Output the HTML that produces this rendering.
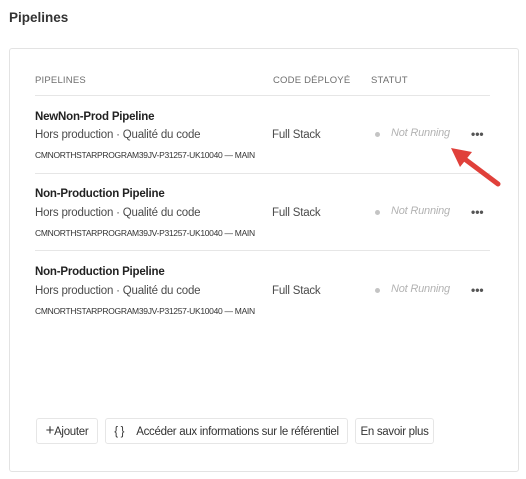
<!DOCTYPE html><html><head><style>
body{margin:0;width:526px;height:479px;background:#fff;font-family:"Liberation Sans",sans-serif;color:#2c2c2c;position:relative;overflow:hidden}
.a{position:absolute;white-space:nowrap}
.card{position:absolute;left:9px;top:48px;width:508px;height:422px;border:1px solid #e3e3e3;border-radius:3px}
.h{font-size:9.5px;color:#6e6e6e;letter-spacing:.2px}
.n{font-size:11.5px;font-weight:bold;color:#222;letter-spacing:-.2px}
.s{font-size:11.5px;color:#4b4b4b;letter-spacing:-.2px}
.r{font-size:8.5px;color:#333;letter-spacing:-.3px}
.st{font-size:11px;color:#b3b3b3;font-style:italic;letter-spacing:-.2px}
.dot{position:absolute;width:5px;height:5px;border-radius:50%;background:#c4c4c4}
.line{position:absolute;left:35px;width:455px;height:1px;background:#e6e6e6}
.more{font-size:12px;font-weight:bold;color:#555}
.btn{position:absolute;top:418px;height:26px;border:1px solid #e6e6e6;border-radius:3px;font-size:11.5px;line-height:26px;color:#333;letter-spacing:-.3px;box-sizing:border-box;text-align:center}
</style></head><body>
<div class="a" style="left:9px;top:10px;font-size:13.5px;font-weight:bold;color:#333">Pipelines</div>
<div class="card"></div>
<div class="a h" style="left:35px;top:75px">PIPELINES</div>
<div class="a h" style="left:273px;top:75px">CODE DÉPLOYÉ</div>
<div class="a h" style="left:371px;top:75px">STATUT</div>
<div class="line" style="top:95px"></div>

<div class="a n" style="left:35px;top:111px">NewNon-Prod Pipeline</div>
<div class="a s" style="left:35px;top:129px">Hors production · Qualité du code</div>
<div class="a r" style="left:35px;top:150px">CMNORTHSTARPROGRAM39JV-P31257-UK10040 — MAIN</div>
<div class="a s" style="left:272px;top:129px">Full Stack</div>
<div class="dot" style="left:375px;top:132px"></div>
<div class="a st" style="left:391px;top:127px">Not Running</div>
<div class="a more" style="left:471px;top:127px">•••</div>
<div class="line" style="top:173px"></div>

<div class="a n" style="left:35px;top:188px">Non-Production Pipeline</div>
<div class="a s" style="left:35px;top:207px">Hors production · Qualité du code</div>
<div class="a r" style="left:35px;top:228px">CMNORTHSTARPROGRAM39JV-P31257-UK10040 — MAIN</div>
<div class="a s" style="left:272px;top:207px">Full Stack</div>
<div class="dot" style="left:375px;top:210px"></div>
<div class="a st" style="left:391px;top:205px">Not Running</div>
<div class="a more" style="left:471px;top:205px">•••</div>
<div class="line" style="top:250px"></div>

<div class="a n" style="left:35px;top:266px">Non-Production Pipeline</div>
<div class="a s" style="left:35px;top:285px">Hors production · Qualité du code</div>
<div class="a r" style="left:35px;top:306px">CMNORTHSTARPROGRAM39JV-P31257-UK10040 — MAIN</div>
<div class="a s" style="left:272px;top:285px">Full Stack</div>
<div class="dot" style="left:375px;top:288px"></div>
<div class="a st" style="left:391px;top:283px">Not Running</div>
<div class="a more" style="left:471px;top:283px">•••</div>

<div class="btn" style="left:36px;width:62px"><span style="font-size:15px;line-height:20px">+</span>Ajouter</div>
<div class="btn" style="left:105px;width:243px"><span style="margin-right:12px">{ }</span>Accéder aux informations sur le référentiel</div>
<div class="btn" style="left:355px;width:79px">En savoir plus</div>

<svg class="a" style="left:440px;top:140px" width="70" height="55"><line x1="58" y1="44" x2="22" y2="17" stroke="#e0403a" stroke-width="5" stroke-linecap="round"/><polygon points="11,8 32,12 20,27" fill="#e0403a"/></svg>
</body></html>
